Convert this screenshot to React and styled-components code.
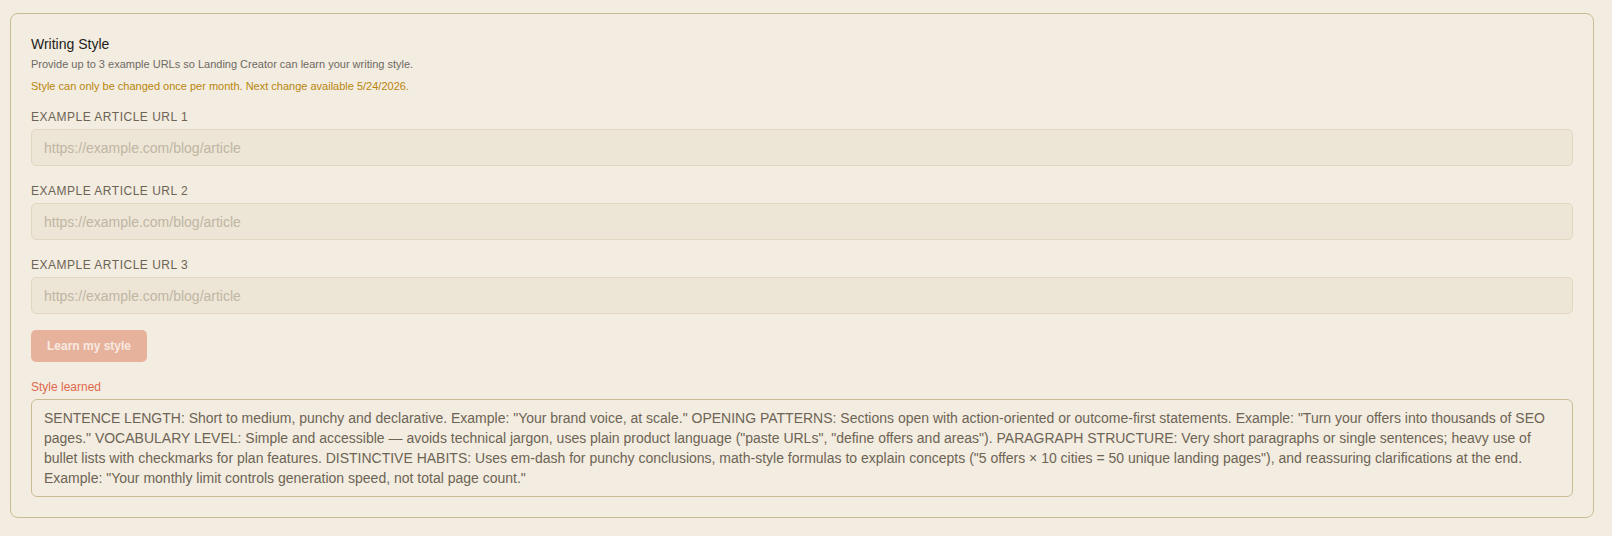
import React, { useState } from "react";
import styled, { createGlobalStyle } from "styled-components";

const GlobalStyle = createGlobalStyle`
  html, body {
    margin: 0;
    padding: 0;
    background: #f3ece1;
  }
  body {
    font-family: "Liberation Sans", Arial, sans-serif;
  }
  * {
    box-sizing: border-box;
  }
`;

const Page = styled.div`
  padding: 13px 18px 18px 10px;
`;

const Card = styled.section`
  border: 1px solid #cbbb93;
  border-radius: 8px;
  padding: 20px 20px 20px;
  background: #f3ece1;
`;

const Title = styled.h2`
  margin: 0;
  font-size: 14px;
  font-weight: 400;
  line-height: 20px;
  color: #1e1d1a;
`;

const Note = styled.p`
  margin: 0;
  font-size: 11px;
  line-height: 18px;
  color: ${(p) => (p.$warn ? "#b8860b" : "#6e6a62")};
  margin-top: ${(p) => (p.$warn ? "4px" : "1px")};
`;

const Fields = styled.div`
  display: flex;
  flex-direction: column;
  gap: 18px;
  margin-top: 15px;
`;

const Field = styled.label`
  display: flex;
  flex-direction: column;
  gap: 5px;
`;

const Label = styled.span`
  font-size: 12px;
  line-height: 14px;
  letter-spacing: 0.5px;
  text-transform: uppercase;
  color: #6d6454;
`;

const Input = styled.input`
  width: 100%;
  height: 37px;
  padding: 0 12px;
  border: 1px solid #e2d8c1;
  border-radius: 5px;
  background: #ede5d5;
  font-family: inherit;
  font-size: 14px;
  color: #4a4436;
  outline: none;

  &::placeholder {
    color: #bfb6a4;
  }
`;

const Button = styled.button`
  margin-top: 16px;
  height: 32px;
  padding: 0 16px;
  border: none;
  border-radius: 5px;
  background: #e7b29c;
  color: #f7e9e1;
  font-family: inherit;
  font-size: 12px;
  font-weight: 700;
  cursor: default;
  align-self: flex-start;
`;

const Learned = styled.div`
  margin-top: 18px;
  display: flex;
  flex-direction: column;
  gap: 5px;
`;

const LearnedLabel = styled.span`
  font-size: 12px;
  line-height: 14px;
  color: #e0694c;
`;

const LearnedBox = styled.div`
  border: 1px solid #cbbb93;
  border-radius: 6px;
  padding: 8px 12px;
  font-size: 14px;
  line-height: 20px;
  color: #6d6454;
`;

const Column = styled.div`
  display: flex;
  flex-direction: column;
`;

const learnedText =
  'SENTENCE LENGTH: Short to medium, punchy and declarative. Example: "Your brand voice, at scale." OPENING PATTERNS: Sections open with action-oriented or outcome-first statements. Example: "Turn your offers into thousands of SEO pages." VOCABULARY LEVEL: Simple and accessible \u2014 avoids technical jargon, uses plain product language ("paste URLs", "define offers and areas"). PARAGRAPH STRUCTURE: Very short paragraphs or single sentences; heavy use of bullet lists with checkmarks for plan features. DISTINCTIVE HABITS: Uses em-dash for punchy conclusions, math-style formulas to explain concepts ("5 offers \u00d7 10 cities = 50 unique landing pages"), and reassuring clarifications at the end. Example: "Your monthly limit controls generation speed, not total page count."';

export default function App() {
  const [urls, setUrls] = useState(["", "", ""]);

  const update = (i, value) => {
    const next = [...urls];
    next[i] = value;
    setUrls(next);
  };

  return (
    <>
      <GlobalStyle />
      <Page>
        <Card>
          <Title>Writing Style</Title>
          <Note>
            Provide up to 3 example URLs so Landing Creator can learn your
            writing style.
          </Note>
          <Note $warn>
            Style can only be changed once per month. Next change available
            5/24/2026.
          </Note>
          <Column>
            <Fields>
              {urls.map((url, i) => (
                <Field key={i}>
                  <Label>Example article URL {i + 1}</Label>
                  <Input
                    type="url"
                    placeholder="https://example.com/blog/article"
                    value={url}
                    onChange={(e) => update(i, e.target.value)}
                  />
                </Field>
              ))}
            </Fields>
            <Button type="button" disabled>
              Learn my style
            </Button>
            <Learned>
              <LearnedLabel>Style learned</LearnedLabel>
              <LearnedBox>{learnedText}</LearnedBox>
            </Learned>
          </Column>
        </Card>
      </Page>
    </>
  );
}
